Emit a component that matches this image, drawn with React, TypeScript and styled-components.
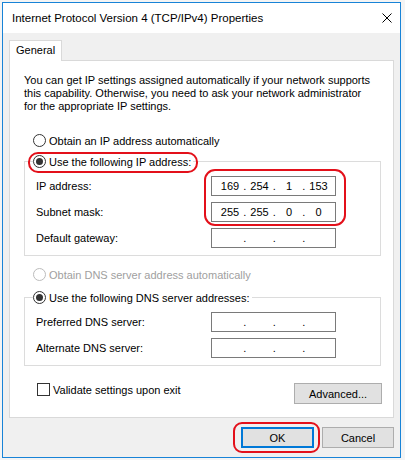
import React from "react";
import styled, { createGlobalStyle } from "styled-components";

const GlobalStyle = createGlobalStyle`
  html, body { margin: 0; padding: 0; }
  body {
    background: #f4f4f4;
    font-family: "Liberation Sans", Arial, sans-serif;
    font-size: 11px;
    color: #000;
  }
  * { box-sizing: border-box; }
`;

const Screen = styled.div`
  width: 405px;
  height: 460px;
  padding: 2px 0 0 2px;
  overflow: hidden;
  background: #f4f4f4;
`;

const Window = styled.div`
  width: 399px;
  height: 456px;
  border: 1px solid #1883d7;
  display: flex;
  flex-direction: column;
  background: #f0f0f0;
`;

const TitleBar = styled.div`
  height: 30px;
  flex: none;
  background: #fff;
  display: flex;
  align-items: center;
  justify-content: space-between;
  padding: 0 8px 0 9px;
`;

const Title = styled.span`
  font-size: 11.5px;
  line-height: 30px;
  color: #000;
`;

const CloseIcon = styled.svg`
  display: block;
  width: 10px;
  height: 10px;
`;

const Body = styled.div`
  flex: 1;
  display: flex;
  flex-direction: column;
  padding: 7px 6px 0 6px;
`;

const TabStrip = styled.div`
  display: flex;
`;

const Tab = styled.div`
  position: relative;
  z-index: 1;
  width: 53px;
  height: 21px;
  margin-bottom: -1px;
  padding-left: 6px;
  line-height: 19px;
  background: #fff;
  border: 1px solid #d9d9d9;
  border-bottom: none;
`;

const Panel = styled.div`
  height: 358px;
  background: #fff;
  border: 1px solid #d9d9d9;
  padding: 13px 11px 0 14px;
  display: flex;
  flex-direction: column;
`;

const Description = styled.p`
  margin: 0;
  line-height: 13px;
  white-space: nowrap;
`;

const RadioRow = styled.label<{ $top: number; $disabled?: boolean }>`
  display: flex;
  align-items: center;
  gap: 3px;
  height: 17px;
  margin: ${(p) => p.$top}px 0 0 9px;
  color: ${(p) => (p.$disabled ? "#a0a0a0" : "#000")};
`;

const RadioCircle = styled.span<{ $checked?: boolean; $disabled?: boolean }>`
  width: 13px;
  height: 13px;
  flex: none;
  border-radius: 50%;
  border: 1px solid ${(p) => (p.$disabled ? "#bcbcbc" : "#333")};
  background: #fff;
  display: flex;
  align-items: center;
  justify-content: center;
  &::after {
    content: "";
    display: ${(p) => (p.$checked ? "block" : "none")};
    width: 7px;
    height: 7px;
    border-radius: 50%;
    background: #333;
  }
`;

const Group = styled.fieldset<{ $top: number }>`
  margin: ${(p) => p.$top}px 0 0 0;
  padding: 0;
  min-inline-size: 0;
  width: 357px;
  border: 1px solid #dcdcdc;
`;

const Legend = styled.legend`
  margin-left: 8px;
  padding: 0 2px 0 0;
  height: 17px;
`;

const LegendLabel = styled.span<{ $marked?: boolean }>`
  position: relative;
  display: flex;
  align-items: center;
  gap: 3px;
  height: 17px;
  white-space: nowrap;
  &::after {
    content: "";
    display: ${(p) => (p.$marked ? "block" : "none")};
    position: absolute;
    top: -1px;
    bottom: -3px;
    left: -5px;
    right: -7px;
    border: 2px solid #e3101a;
    border-radius: 10px;
    pointer-events: none;
  }
`;

const FieldGrid = styled.div`
  display: grid;
  grid-template-columns: 175px 125px;
  grid-auto-rows: 20px;
  row-gap: 6px;
  align-items: center;
  padding: 6px 0 7px 11px;
`;

const FieldLabel = styled.span<{ $row: number }>`
  grid-column: 1;
  grid-row: ${(p) => p.$row};
  line-height: 20px;
`;

const IpBox = styled.div<{ $row: number }>`
  grid-column: 2;
  grid-row: ${(p) => p.$row};
  height: 20px;
  border: 1px solid #7a7a7a;
  background: #fff;
  display: flex;
  align-items: center;
  padding-left: 6px;
`;

const Octet = styled.span`
  width: 24px;
  text-align: center;
`;

const Dot = styled.span`
  width: 5.5px;
  text-align: center;
`;

const Highlight = styled.div`
  grid-column: 2;
  grid-row: 1 / span 2;
  align-self: stretch;
  margin: -7px -10px -4px -7px;
  border: 2px solid #e3101a;
  border-radius: 11px;
  pointer-events: none;
  z-index: 1;
`;

const BottomRow = styled.div`
  display: flex;
  justify-content: space-between;
  align-items: flex-start;
  margin-top: 17px;
  padding-left: 13px;
`;

const CheckLabel = styled.label`
  display: flex;
  align-items: center;
  gap: 3px;
  height: 13px;
`;

const CheckBox = styled.span`
  width: 13px;
  height: 13px;
  border: 1px solid #333;
  background: #fff;
  flex: none;
`;

const Button = styled.button<{ $width: number; $default?: boolean }>`
  width: ${(p) => p.$width}px;
  height: 21px;
  padding: 0;
  font: inherit;
  color: #000;
  background: #e1e1e1;
  border: ${(p) => (p.$default ? "2px solid #0078d7" : "1px solid #adadad")};
  border-radius: 0;
`;

const Footer = styled.div`
  display: flex;
  justify-content: flex-end;
  gap: 8px;
  padding-top: 9px;
`;

const Marked = styled.span`
  position: relative;
  display: flex;
  &::after {
    content: "";
    position: absolute;
    top: -5px;
    bottom: -5px;
    left: -8px;
    right: -6px;
    border: 2px solid #e3101a;
    border-radius: 9px;
    pointer-events: none;
  }
`;

function Radio({ checked, disabled }: { checked?: boolean; disabled?: boolean }) {
  return <RadioCircle $checked={checked} $disabled={disabled} />;
}

function IpInput({ row, value }: { row: number; value?: string[] }) {
  const parts = value ?? ["", "", "", ""];
  return (
    <IpBox $row={row}>
      {parts.map((p, i) => (
        <React.Fragment key={i}>
          {i > 0 && <Dot>.</Dot>}
          <Octet>{p}</Octet>
        </React.Fragment>
      ))}
    </IpBox>
  );
}

export default function App() {
  return (
    <>
      <GlobalStyle />
      <Screen>
        <Window>
          <TitleBar>
            <Title>Internet Protocol Version 4 (TCP/IPv4) Properties</Title>
            <CloseIcon viewBox="0 0 10 10">
              <path d="M0.5 0.5 L9.5 9.5 M9.5 0.5 L0.5 9.5" stroke="#000" strokeWidth="1" fill="none" />
            </CloseIcon>
          </TitleBar>
          <Body>
            <TabStrip>
              <Tab>General</Tab>
            </TabStrip>
            <Panel>
              <Description>
                You can get IP settings assigned automatically if your network supports
                <br />
                this capability. Otherwise, you need to ask your network administrator
                <br />
                for the appropriate IP settings.
              </Description>

              <RadioRow $top={19}>
                <Radio />
                Obtain an IP address automatically
              </RadioRow>

              <Group $top={4}>
                <Legend>
                  <LegendLabel $marked>
                    <Radio checked />
                    Use the following IP address:
                  </LegendLabel>
                </Legend>
                <FieldGrid>
                  <FieldLabel $row={1}>IP address:</FieldLabel>
                  <IpInput row={1} value={["169", "254", "1", "153"]} />
                  <FieldLabel $row={2}>Subnet mask:</FieldLabel>
                  <IpInput row={2} value={["255", "255", "0", "0"]} />
                  <FieldLabel $row={3}>Default gateway:</FieldLabel>
                  <IpInput row={3} />
                  <Highlight />
                </FieldGrid>
              </Group>

              <RadioRow $top={10} $disabled>
                <Radio disabled />
                Obtain DNS server address automatically
              </RadioRow>

              <Group $top={6}>
                <Legend>
                  <LegendLabel>
                    <Radio checked />
                    Use the following DNS server addresses:
                  </LegendLabel>
                </Legend>
                <FieldGrid>
                  <FieldLabel $row={1}>Preferred DNS server:</FieldLabel>
                  <IpInput row={1} />
                  <FieldLabel $row={2}>Alternate DNS server:</FieldLabel>
                  <IpInput row={2} />
                </FieldGrid>
              </Group>

              <BottomRow>
                <CheckLabel>
                  <CheckBox />
                  Validate settings upon exit
                </CheckLabel>
                <Button $width={88}>Advanced...</Button>
              </BottomRow>
            </Panel>
            <Footer>
              <Marked>
                <Button $width={73} $default>
                  OK
                </Button>
              </Marked>
              <Button $width={72}>Cancel</Button>
            </Footer>
          </Body>
        </Window>
      </Screen>
    </>
  );
}
